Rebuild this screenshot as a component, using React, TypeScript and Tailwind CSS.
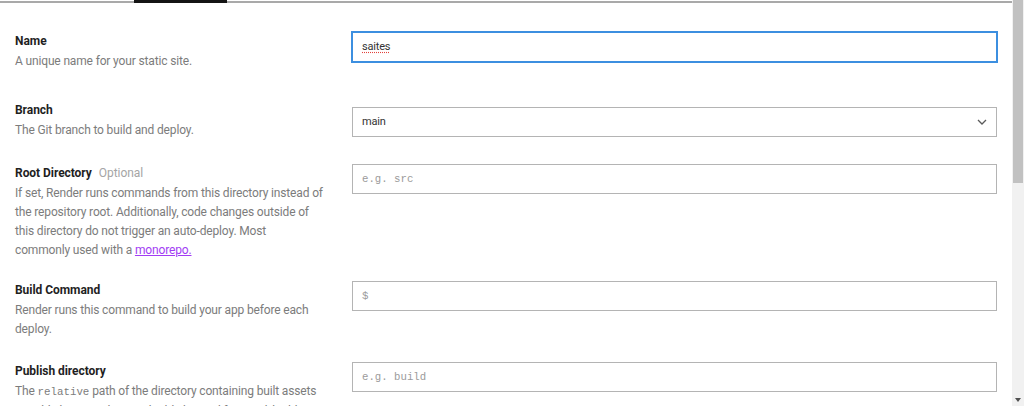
import type { ReactNode } from "react"

type RowProps = {
  label: string
  optional?: boolean
  desc: ReactNode
  field: ReactNode
  gap: string
}

function Row({ label, optional, desc, field, gap }: RowProps) {
  return (
    <div className={`flex ${gap}`}>
      <div className="w-[337px] shrink-0 pr-[26px]">
        <div className="flex items-baseline gap-[7px] text-[12px] leading-[20px] font-bold tracking-[-0.05px] text-[#1f1f1f]">
          <span>{label}</span>
          {optional && <span className="font-normal text-[#a5a5a5]">Optional</span>}
        </div>
        <p className="mt-[1px] text-[12px] leading-[19px] tracking-[-0.15px] text-[#7c7c7c]">{desc}</p>
      </div>
      <div className="min-w-0 flex-1">{field}</div>
    </div>
  )
}

function Box({ children, offset, focused }: { children: ReactNode; offset: string; focused?: boolean }) {
  return (
    <div
      className={`${offset} flex h-[30px] items-center px-[9px] ${
        focused ? "border border-[#3c8fe0] ring-1 ring-[#3c8fe0]" : "border border-[#b4b4b4]"
      }`}
    >
      {children}
    </div>
  )
}

const placeholder = "font-['Liberation_Mono',monospace] text-[10.7px] text-[#9b9b9b]"

export default function App() {
  return (
    <div className="flex h-[406px] w-[1024px] overflow-hidden bg-white font-['Roboto','Liberation_Sans',sans-serif]">
      <div className="flex min-w-0 flex-1 flex-col">
        {/* tab bar edge */}
        <div className="flex h-[3px] shrink-0">
          <div className="mt-[1px] h-[2px] w-[134px] bg-[#a9a9a9]" />
          <div className="h-[3px] w-[93px] bg-[#141414]" />
          <div className="mt-[1px] h-[2px] flex-1 bg-[#a9a9a9]" />
        </div>

        <div className="flex flex-col px-[15px] pt-[28px]">
          <Row
            gap="mt-0"
            label="Name"
            desc="A unique name for your static site."
            field={
              <Box offset="mt-[1px]" focused>
                <span className="text-[11px] tracking-[-0.2px] text-[#333] underline decoration-[#e2423c] decoration-dotted underline-offset-2">
                  saites
                </span>
              </Box>
            }
          />
          <Row
            gap="mt-[29px]"
            label="Branch"
            desc="The Git branch to build and deploy."
            field={
              <Box offset="mt-[7px] justify-between">
                <span className="text-[11px] tracking-[-0.2px] text-[#333]">main</span>
                <svg width="10" height="6" viewBox="0 0 10 6">
                  <path d="M1 1l4 4 4-4" fill="none" stroke="#5a5a5a" strokeWidth="1.3" />
                </svg>
              </Box>
            }
          />
          <Row
            gap="mt-[23px]"
            label="Root Directory"
            optional
            desc={
              <>
                If set, Render runs commands from this directory instead of the repository root. Additionally, code
                changes outside of this directory do not trigger an auto-deploy. Most
                <br />
                commonly used with a <a className="text-[#a23cf4] underline">monorepo.</a>
              </>
            }
            field={
              <Box offset="mt-[1px]">
                <span className={placeholder}>e.g. src</span>
              </Box>
            }
          />
          <Row
            gap="mt-[20px]"
            label="Build Command"
            desc="Render runs this command to build your app before each deploy."
            field={
              <Box offset="mt-[1px]">
                <span className={placeholder}>$</span>
              </Box>
            }
          />
          <Row
            gap="mt-[22px]"
            label="Publish directory"
            desc={
              <>
                The <code className="font-['Liberation_Mono',monospace] text-[10.8px] tracking-normal">relative</code>{" "}
                path of the directory containing built assets to publish. Examples: ./, ./build, dist and
                frontend/build.
              </>
            }
            field={
              <Box offset="mt-[1px]">
                <span className={placeholder}>e.g. build</span>
              </Box>
            }
          />
        </div>
      </div>

      {/* scrollbar */}
      <div className="flex w-[12px] shrink-0 flex-col bg-[#f1f1f1]">
        <div className="mx-[1px] h-[183px] bg-[#c1c1c1]" />
        <div className="flex-1" />
        <div className="flex h-[12px] items-center justify-center">
          <svg width="6" height="4" viewBox="0 0 6 4">
            <path d="M0 0h6L3 4z" fill="#505050" />
          </svg>
        </div>
      </div>
    </div>
  )
}
